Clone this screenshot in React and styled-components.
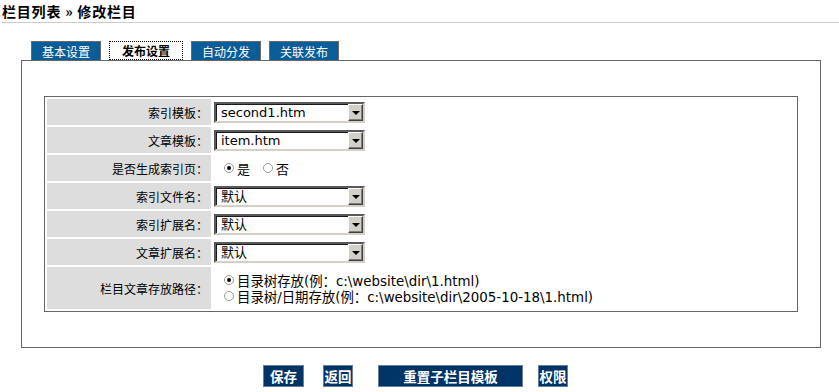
import React from 'react';
import styled, { createGlobalStyle } from 'styled-components';

const GlobalStyle = createGlobalStyle`
  body {
    margin: 0;
    background: #ffffff;
    font-family: "DejaVu Sans", "Noto Sans CJK SC", sans-serif;
    font-size: 12px;
    color: #000000;
  }
`;

const Page = styled.div`
  width: 839px;
`;

const Title = styled.div`
  margin: 0 0 0 2px;
  padding: 3px 0 2px 0;
  height: 17px;
  border-bottom: 1px solid #cccccc;
  font-family: "Noto Sans CJK SC", sans-serif;
  font-size: 14px;
  font-weight: bold;
  line-height: 17px;
  letter-spacing: 0.8px;
`;

const TabBar = styled.div`
  display: flex;
  gap: 8px;
  margin: 18px 0 0 31px;
  height: 19px;
`;

const Tab = styled.div`
  box-sizing: border-box;
  width: ${p => p.$w}px;
  height: 19px;
  display: flex;
  align-items: center;
  justify-content: center;
  font-family: "Noto Sans CJK SC", sans-serif;
  font-size: 12px;
  cursor: pointer;
  ${p =>
    p.$active
      ? `
    background: #ffffff;
    color: #000000;
    font-weight: bold;
    border: 1px dotted #000000;
  `
      : `
    background: #0b5d98;
    color: #ffffff;
    border: 1px solid #6b6b6b;
    border-bottom: none;
  `}
`;

const Panel = styled.div`
  box-sizing: border-box;
  margin-left: 21px;
  width: 800px;
  border: 1px solid #666666;
  padding: 35px 22px 35px 22px;
`;

const Form = styled.div`
  display: grid;
  grid-template-columns: 164px 1fr;
  gap: 2px;
  padding: 2px;
  border: 1px solid #666666;
`;

const Label = styled.div`
  background: #dddddd;
  height: ${p => p.$h || 26}px;
  display: flex;
  align-items: center;
  justify-content: flex-end;
  padding-right: 3px;
  font-family: "Noto Sans CJK SC", sans-serif;
  font-size: 12px;
  color: #000000;
`;

const Value = styled.div`
  height: ${p => p.$h || 26}px;
  display: flex;
  flex-direction: ${p => (p.$column ? 'column' : 'row')};
  justify-content: ${p => (p.$column ? 'center' : 'flex-start')};
  align-items: ${p => (p.$column ? 'flex-start' : 'center')};
  padding-left: 1px;
`;

const Select = styled.div`
  box-sizing: border-box;
  width: 151px;
  height: 21px;
  display: flex;
  align-items: center;
  background: #ffffff;
  border-style: solid;
  border-width: 2px;
  border-color: #5a5a5a #d4d0c8 #d4d0c8 #5a5a5a;
  box-shadow: inset 1px 1px 0 #1a1a1a;
`;

const SelectText = styled.span`
  flex: 1;
  padding-left: 5px;
  font-family: "DejaVu Sans", "Noto Sans CJK SC", sans-serif;
  font-size: 13px;
  line-height: 17px;
  white-space: nowrap;
`;

const Arrow = styled.span`
  box-sizing: border-box;
  width: 15px;
  height: 17px;
  background: #d4d0c8;
  border-style: solid;
  border-width: 1px;
  border-color: #ffffff #404040 #404040 #ffffff;
  box-shadow: inset -1px -1px 0 #808080;
  display: flex;
  align-items: center;
  justify-content: center;

  &::after {
    content: '';
    width: 0;
    height: 0;
    border-left: 4px solid transparent;
    border-right: 4px solid transparent;
    border-top: 4px solid #000000;
    margin-top: 1px;
  }
`;

const RadioGroup = styled.div`
  display: flex;
  align-items: center;
  gap: ${p => p.$gap || 0}px;
  padding-left: 10px;
  height: ${p => p.$lh || 16}px;
`;

const RadioItem = styled.label`
  display: flex;
  align-items: center;
  gap: 3px;
  font-family: "Noto Sans CJK SC", sans-serif;
  font-size: 13px;
  white-space: nowrap;
`;

const RadioDot = styled.span`
  box-sizing: border-box;
  width: 10px;
  height: 10px;
  border-radius: 50%;
  border: 1px solid #9a9a9a;
  background: #ffffff;
  display: flex;
  align-items: center;
  justify-content: center;

  &::after {
    content: '';
    width: 4px;
    height: 4px;
    border-radius: 50%;
    background: ${p => (p.$checked ? '#000000' : 'transparent')};
  }
`;

const PathText = styled.span`
  font-family: "DejaVu Sans", "Noto Sans CJK SC", sans-serif;
  font-size: 13.4px;
`;

const Actions = styled.div`
  display: flex;
  margin: 17px 0 0 263px;
`;

const Button = styled.button`
  box-sizing: border-box;
  width: ${p => p.$w}px;
  height: 22px;
  margin-left: ${p => p.$ml || 0}px;
  padding: 0;
  display: flex;
  align-items: center;
  justify-content: center;
  overflow: visible;
  white-space: nowrap;
  background: #003366;
  border: 1px solid #6a7f9c;
  color: #ffffff;
  font-family: "Noto Sans CJK SC", sans-serif;
  font-size: 13.5px;
  font-weight: bold;
  cursor: pointer;
`;

const selects = [
  ['索引模板：', 'second1.htm'],
  ['文章模板：', 'item.htm'],
];

const selects2 = [
  ['索引文件名：', '默认'],
  ['索引扩展名：', '默认'],
  ['文章扩展名：', '默认'],
];

const tabs = [
  { name: '基本设置', w: 70 },
  { name: '发布设置', w: 74, active: true },
  { name: '自动分发', w: 70 },
  { name: '关联发布', w: 70 },
];

const buttons = [
  { text: '保存', w: 41 },
  { text: '返回', w: 30, ml: 19 },
  { text: '重置子栏目模板', w: 145, ml: 25 },
  { text: '权限', w: 30, ml: 15 },
];

const SelectRow = ({ label, value }) => (
  <>
    <Label>{label}</Label>
    <Value>
      <Select>
        <SelectText>{value}</SelectText>
        <Arrow />
      </Select>
    </Value>
  </>
);

export default function App() {
  return (
    <Page>
      <GlobalStyle />
      <Title>栏目列表 » 修改栏目</Title>
      <TabBar>
        {tabs.map(t => (
          <Tab key={t.name} $w={t.w} $active={t.active}>
            {t.name}
          </Tab>
        ))}
      </TabBar>
      <Panel>
        <Form>
          {selects.map(([l, v]) => (
            <SelectRow key={l} label={l} value={v} />
          ))}
          <Label>是否生成索引页：</Label>
          <Value>
            <RadioGroup $gap={13}>
              <RadioItem>
                <RadioDot $checked />是
              </RadioItem>
              <RadioItem>
                <RadioDot />否
              </RadioItem>
            </RadioGroup>
          </Value>
          {selects2.map(([l, v]) => (
            <SelectRow key={l} label={l} value={v} />
          ))}
          <Label $h={42}>栏目文章存放路径：</Label>
          <Value $h={42} $column>
            <RadioGroup $lh={16}>
              <RadioItem>
                <RadioDot $checked />
                <PathText>目录树存放(例：c:\website\dir\1.html)</PathText>
              </RadioItem>
            </RadioGroup>
            <RadioGroup $lh={16}>
              <RadioItem>
                <RadioDot />
                <PathText>目录树/日期存放(例：c:\website\dir\2005-10-18\1.html)</PathText>
              </RadioItem>
            </RadioGroup>
          </Value>
        </Form>
      </Panel>
      <Actions>
        {buttons.map(b => (
          <Button key={b.text} $w={b.w} $ml={b.ml}>
            {b.text}
          </Button>
        ))}
      </Actions>
    </Page>
  );
}
